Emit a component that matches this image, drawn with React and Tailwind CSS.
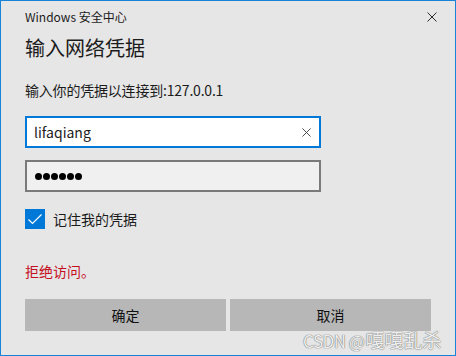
import React from "react";

const font = { fontFamily: '"Noto Sans CJK SC", "Noto Sans", sans-serif' };

function XIcon({ size = 10, stroke = "#1f1f1f", width = 1 }) {
  return (
    <svg width={size} height={size} viewBox="0 0 10 10" fill="none">
      <path d="M0.5 0.5L9.5 9.5M9.5 0.5L0.5 9.5" stroke={stroke} strokeWidth={width} />
    </svg>
  );
}

export default function App() {
  return (
    <div
      className="relative w-[456px] h-[356px] bg-[#e6e6e6] border border-[#1883d7] px-6 text-[#1b1b1b] overflow-hidden"
      style={font}
    >
      {/* title bar */}
      <div className="flex items-center justify-between pt-[8px] -mr-[6px]">
        <span className="text-[12px] leading-4">Windows 安全中心</span>
        <XIcon size={10} stroke="#2a2a2a" />
      </div>

      <h1 className="mt-[9px] text-[20px] leading-7 font-normal">输入网络凭据</h1>

      <p className="mt-[18px] text-[14px] leading-5 tracking-[-0.2px]">输入你的凭据以连接到:127.0.0.1</p>

      {/* username */}
      <div className="mt-4 w-[296px] h-8 bg-white border-2 border-[#0078d7] flex items-center pl-[7px] pr-[8px]">
        <span className="flex-1 text-[14px] leading-5">lifaqiang</span>
        <XIcon size={9} stroke="#3a3a3a" />
      </div>

      {/* password */}
      <div className="mt-3 w-[296px] h-8 bg-[#f0f0f0] border-2 border-[#7a7a7a] flex items-center pl-[8px] gap-[1px]">
        {[0, 1, 2, 3, 4, 5].map((i) => (
          <span key={i} className="w-[7px] h-[7px] rounded-full bg-black" />
        ))}
      </div>

      {/* remember */}
      <div className="mt-[17px] flex items-center gap-2">
        <div className="w-5 h-5 bg-[#0078d7] flex items-center justify-center">
          <svg width="20" height="20" viewBox="0 0 20 20" fill="none">
            <path d="M3.5 10.5L7.5 14.5L16.5 5.5" stroke="white" strokeWidth="1.2" />
          </svg>
        </div>
        <span className="text-[14px] leading-5">记住我的凭据</span>
      </div>

      <p className="mt-8 text-[14px] leading-5 text-[#c50f1f]">拒绝访问。</p>

      {/* buttons */}
      <div className="mt-[18px] flex gap-1">
        <button className="flex-1 h-8 bg-[#b7b7b7] text-[14px] text-[#111]">确定</button>
        <button className="flex-1 h-8 bg-[#b7b7b7] text-[14px] text-[#111]">取消</button>
      </div>

      {/* watermark */}
      <div className="absolute left-[302px] top-[327px] flex items-baseline text-[#eeeeee] [text-shadow:0_0_1px_#6f6f6f,0_0_1px_#6f6f6f]">
        <span className="text-[17px] tracking-[-0.5px] mr-[1px]">CSDN @</span>
        <span className="text-[19px] leading-6">嘎嘎乱杀</span>
      </div>
    </div>
  );
}
